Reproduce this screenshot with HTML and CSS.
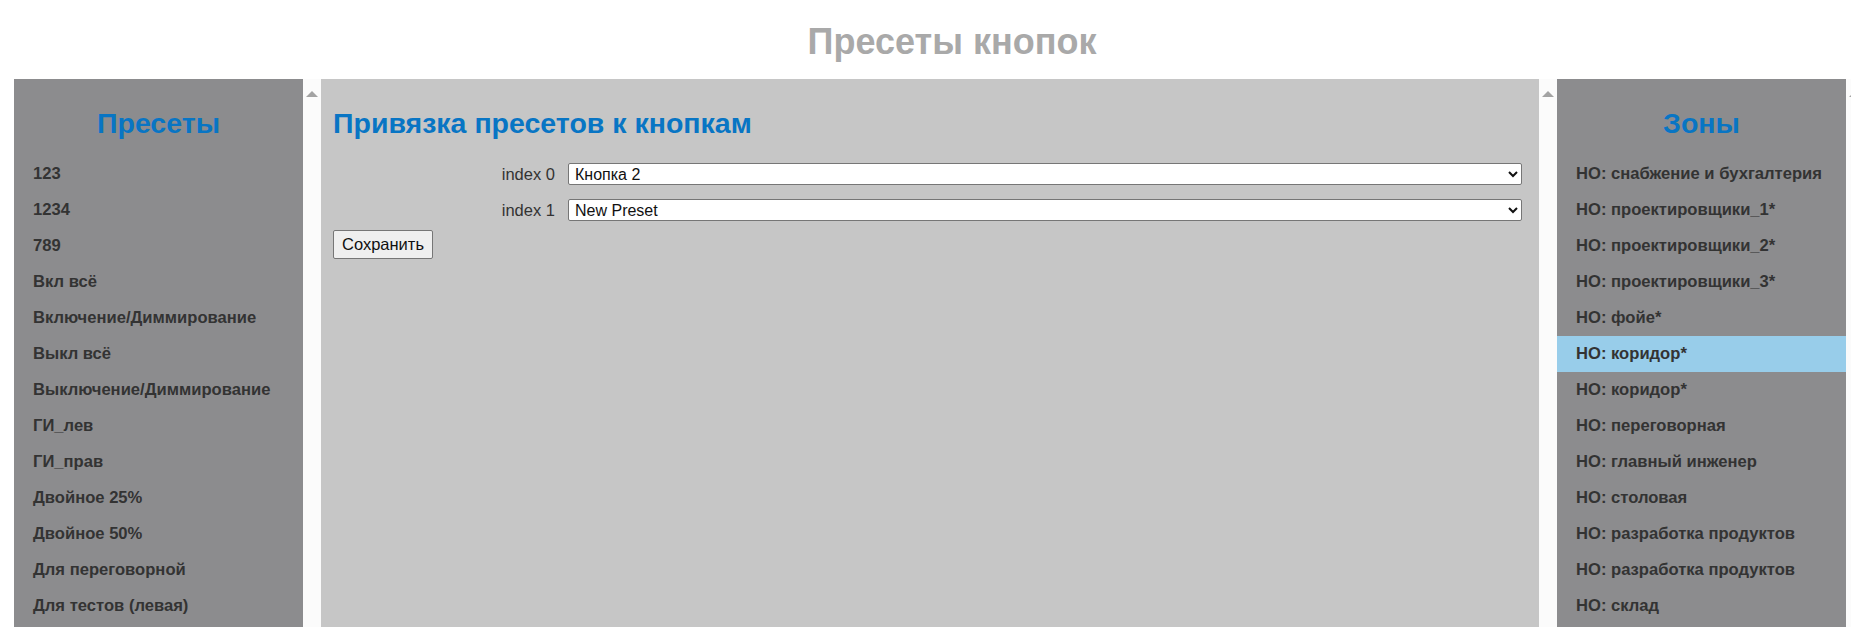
FILE: index.html
```html
<!DOCTYPE html>
<html lang="ru">
<head>
<meta charset="utf-8">
<title>Пресеты кнопок</title>
<link rel="stylesheet" href="styles.css">
</head>
<body>
<div class="page">
  <h1 class="page-title">Пресеты кнопок</h1>
  <div class="columns">
    <section class="side-panel">
      <h2 class="panel-title center">Пресеты</h2>
      <ul class="item-list">
        <li>123</li>
        <li>1234</li>
        <li>789</li>
        <li>Вкл всё</li>
        <li>Включение/Диммирование</li>
        <li>Выкл всё</li>
        <li>Выключение/Диммирование</li>
        <li>ГИ_лев</li>
        <li>ГИ_прав</li>
        <li>Двойное 25%</li>
        <li>Двойное 50%</li>
        <li>Для переговорной</li>
        <li>Для тестов (левая)</li>
      </ul>
    </section>
    <div class="scroll-strip"><span class="scroll-arrow"></span></div>

    <section class="main-panel">
      <h2 class="panel-title">Привязка пресетов к кнопкам</h2>
      <form class="bind-form">
        <div class="bind-row">
          <label class="bind-label" for="idx0">index 0</label>
          <select class="bind-select" id="idx0">
            <option>Кнопка 2</option>
            <option>New Preset</option>
          </select>
        </div>
        <div class="bind-row">
          <label class="bind-label" for="idx1">index 1</label>
          <select class="bind-select" id="idx1">
            <option>New Preset</option>
            <option>Кнопка 2</option>
          </select>
        </div>
        <div class="form-actions">
          <button type="button" class="save-btn">Сохранить</button>
        </div>
      </form>
    </section>
    <div class="scroll-strip"><span class="scroll-arrow"></span></div>

    <section class="side-panel">
      <h2 class="panel-title center">Зоны</h2>
      <ul class="item-list">
        <li>НО: снабжение и бухгалтерия</li>
        <li>НО: проектировщики_1*</li>
        <li>НО: проектировщики_2*</li>
        <li>НО: проектировщики_3*</li>
        <li>НО: фойе*</li>
        <li class="selected">НО: коридор*</li>
        <li>НО: коридор*</li>
        <li>НО: переговорная</li>
        <li>НО: главный инженер</li>
        <li>НО: столовая</li>
        <li>НО: разработка продуктов</li>
        <li>НО: разработка продуктов</li>
        <li>НО: склад</li>
      </ul>
    </section>
    <div class="scroll-strip"><span class="scroll-arrow"></span></div>
  </div>
</div>
</body>
</html>
```

FILE: styles.css
```css
html, body {
  margin: 0;
  padding: 0;
  overflow: hidden;
  background: #ffffff;
}

body {
  font-family: "Liberation Sans", Arial, sans-serif;
  color: #333333;
}

.page {
  width: 1904px;
  height: 627px;
  display: flex;
  flex-direction: column;
}

.page-title {
  margin: 0;
  padding-top: 24px;
  height: 36px;
  line-height: 36px;
  font-size: 36px;
  font-weight: bold;
  color: #a9a9a9;
  text-align: center;
}

.columns {
  margin-top: 19px;
  padding-left: 14px;
  display: flex;
  flex: 1;
  min-height: 0;
}

.side-panel {
  width: 289px;
  flex: none;
  background: #8c8c8e;
  padding-top: 29px;
  box-sizing: border-box;
  overflow: hidden;
}

.main-panel {
  width: 1218px;
  flex: none;
  background: #c6c6c6;
  padding: 29px 17px 0 12px;
  box-sizing: border-box;
  overflow: hidden;
}

.panel-title {
  margin: 0 0 18px;
  height: 30px;
  line-height: 30px;
  font-size: 28.5px;
  font-weight: bold;
  color: #0875c4;
  white-space: nowrap;
}

.panel-title.center {
  text-align: center;
}

.item-list {
  list-style: none;
  margin: 0;
  padding: 0;
}

.item-list li {
  height: 36px;
  line-height: 36px;
  padding-left: 19px;
  font-size: 16.6px;
  font-weight: bold;
  color: #333333;
  white-space: nowrap;
}

.item-list li.selected {
  background: #98cdea;
}

.scroll-strip {
  width: 18px;
  flex: none;
  background: #fbfbfb;
  display: flex;
  justify-content: center;
  padding-top: 12px;
  box-sizing: border-box;
}

.scroll-arrow {
  width: 0;
  height: 0;
  border-left: 6px solid transparent;
  border-right: 6px solid transparent;
  border-bottom: 6px solid #a3a3a3;
}

.bind-form {
  margin: 0;
}

.bind-row {
  display: grid;
  grid-template-columns: 235px 1fr;
  align-items: center;
  height: 36px;
}

.bind-label {
  text-align: right;
  padding-right: 13px;
  font-size: 16.5px;
  color: #333333;
}

.bind-select {
  height: 22px;
  font-family: "Liberation Sans", Arial, sans-serif;
  font-size: 16px;
  color: #111111;
  background: #ffffff;
  border: 1px solid #767676;
  border-radius: 2px;
  padding: 0 2px;
  margin: 0;
}

.form-actions {
  padding-top: 2px;
}

.save-btn {
  height: 29px;
  padding: 0 8px;
  font-family: "Liberation Sans", Arial, sans-serif;
  font-size: 16.5px;
  color: #111111;
  background: #efefef;
  border: 1px solid #767676;
  border-radius: 2px;
  margin: 0;
}
```
